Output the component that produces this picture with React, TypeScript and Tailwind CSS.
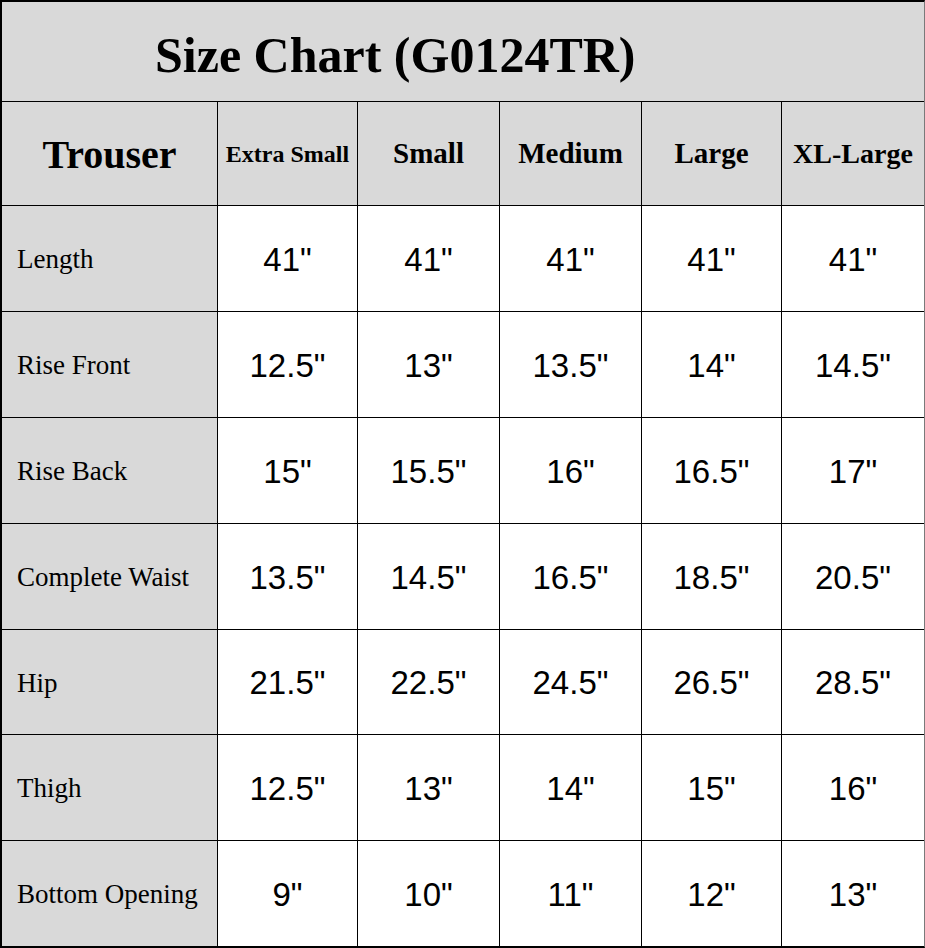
import React from "react";

const serif = { fontFamily: '"Liberation Serif", "Times New Roman", serif' };
const sans = { fontFamily: '"Liberation Sans", Arial, sans-serif' };

const rows: { label: string; vals: string[]; h: string }[] = [
  { label: "Length", vals: ['41"', '41"', '41"', '41"', '41"'], h: "h-[106px]" },
  { label: "Rise Front", vals: ['12.5"', '13"', '13.5"', '14"', '14.5"'], h: "h-[106px]" },
  { label: "Rise Back", vals: ['15"', '15.5"', '16"', '16.5"', '17"'], h: "h-[106px]" },
  { label: "Complete Waist", vals: ['13.5"', '14.5"', '16.5"', '18.5"', '20.5"'], h: "h-[106px]" },
  { label: "Hip", vals: ['21.5"', '22.5"', '24.5"', '26.5"', '28.5"'], h: "h-[105px]" },
  { label: "Thigh", vals: ['12.5"', '13"', '14"', '15"', '16"'], h: "h-[106px]" },
  { label: "Bottom Opening", vals: ['9"', '10"', '11"', '12"', '13"'], h: "h-[105px]" },
];

const cols = "grid grid-cols-[216px_140px_142px_142px_140px_142px]";

export default function App() {
  return (
    <div className="w-[925px] h-[948px] bg-white border-l-2 border-t-2 border-b-2 border-r border-black border-r-[#7a7a7a] text-black">
      <div className="h-[100px] bg-[#d9d9d9] border-b border-black flex items-center pl-[153px] pt-[6px]">
        <span className="text-[50px] font-bold leading-none" style={serif}>
          Size Chart (G0124TR)
        </span>
      </div>
      <div className={`${cols} h-[104px] bg-[#d9d9d9] border-b border-black`}>
        <div className="border-r border-black flex items-center justify-center pt-[2px]">
          <span className="text-[40px] font-bold" style={serif}>Trouser</span>
        </div>
        <div className="border-r border-black flex items-center justify-center">
          <span className="text-[24px] font-bold whitespace-nowrap" style={serif}>Extra Small</span>
        </div>
        <div className="border-r border-black flex items-center justify-center">
          <span className="text-[29px] font-bold" style={serif}>Small</span>
        </div>
        <div className="border-r border-black flex items-center justify-center">
          <span className="text-[29px] font-bold" style={serif}>Medium</span>
        </div>
        <div className="border-r border-black flex items-center justify-center">
          <span className="text-[29px] font-bold" style={serif}>Large</span>
        </div>
        <div className="flex items-center justify-center">
          <span className="text-[28px] font-bold whitespace-nowrap" style={serif}>XL-Large</span>
        </div>
      </div>
      {rows.map((r, i) => (
        <div
          key={r.label}
          className={`${cols} ${r.h} ${i < rows.length - 1 ? "border-b border-black" : ""}`}
        >
          <div className="bg-[#d9d9d9] border-r border-black flex items-center pl-[15px] pt-[2px]">
            <span className="text-[27px] whitespace-nowrap" style={serif}>{r.label}</span>
          </div>
          {r.vals.map((v, j) => (
            <div
              key={j}
              className={`${j < 4 ? "border-r border-black" : ""} flex items-center justify-center pt-[2px]`}
            >
              <span className="text-[33px]" style={sans}>{v}</span>
            </div>
          ))}
        </div>
      ))}
    </div>
  );
}
